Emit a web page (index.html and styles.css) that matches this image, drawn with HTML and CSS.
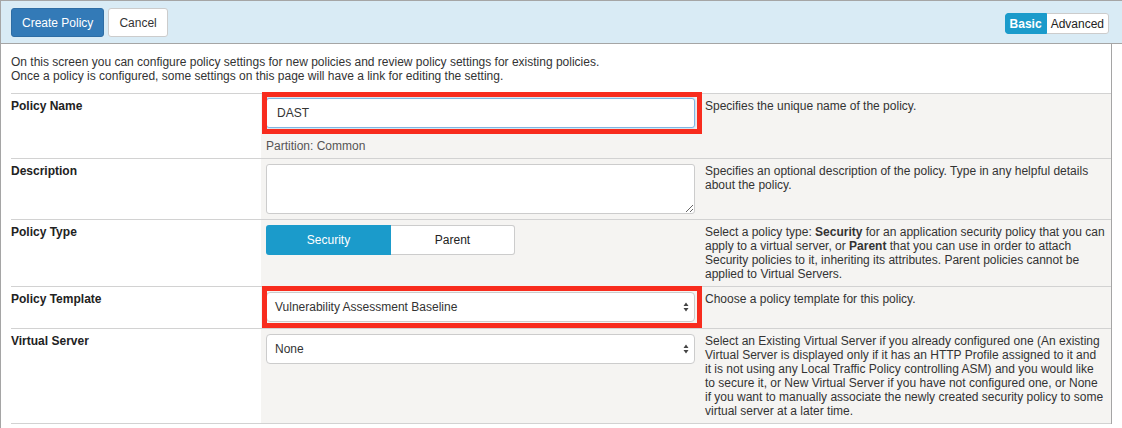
FILE: index.html
```html
<!DOCTYPE html>
<html>
<head>
<meta charset="utf-8">
<title>Create Policy</title>
<link rel="stylesheet" href="styles.css">
</head>
<body>
<div class="page">
  <div class="toolbar">
    <div class="actions">
      <button class="btn btn-primary">Create Policy</button>
      <button class="btn btn-default">Cancel</button>
    </div>
    <div class="mode">
      <span class="mode-item active">Basic</span><span class="mode-item">Advanced</span>
    </div>
  </div>
  <div class="content">
    <div class="intro">
      On this screen you can configure policy settings for new policies and review policy settings for existing policies.<br>
      Once a policy is configured, some settings on this page will have a link for editing the setting.
    </div>
    <div class="rows">
      <div class="row">
        <div class="label">Policy Name</div>
        <div class="field field-name">
          <div class="annot">
            <input class="input focused" type="text" value="DAST">
          </div>
          <div class="partition">Partition: Common</div>
        </div>
        <div class="desc">Specifies the unique name of the policy.</div>
      </div>
      <div class="row">
        <div class="label">Description</div>
        <div class="field">
          <textarea class="textarea"></textarea>
        </div>
        <div class="desc">Specifies an optional description of the policy. Type in any helpful details<br>about the policy.</div>
      </div>
      <div class="row">
        <div class="label">Policy Type</div>
        <div class="field">
          <div class="segmented">
            <span class="seg active">Security</span><span class="seg">Parent</span>
          </div>
        </div>
        <div class="desc">Select a policy type: <b>Security</b> for an application security policy that you can<br>apply to a virtual server, or <b>Parent</b> that you can use in order to attach<br>Security policies to it, inheriting its attributes. Parent policies cannot be<br>applied to Virtual Servers.</div>
      </div>
      <div class="row row-template">
        <div class="label">Policy Template</div>
        <div class="field">
          <div class="annot">
            <div class="select">
              <span class="select-text">Vulnerability Assessment Baseline</span>
              <svg class="arrows" width="6" height="10" viewBox="0 0 6 10"><path d="M3 0.5 L5.5 4 L0.5 4 Z M0.5 6 L5.5 6 L3 9.5 Z" fill="#444"/></svg>
            </div>
          </div>
        </div>
        <div class="desc">Choose a policy template for this policy.</div>
      </div>
      <div class="row">
        <div class="label">Virtual Server</div>
        <div class="field">
          <div class="select">
            <span class="select-text">None</span>
            <svg class="arrows" width="6" height="10" viewBox="0 0 6 10"><path d="M3 0.5 L5.5 4 L0.5 4 Z M0.5 6 L5.5 6 L3 9.5 Z" fill="#444"/></svg>
          </div>
        </div>
        <div class="desc">Select an Existing Virtual Server if you already configured one (An existing<br>Virtual Server is displayed only if it has an HTTP Profile assigned to it and<br>it is not using any Local Traffic Policy controlling ASM) and you would like<br>to secure it, or New Virtual Server if you have not configured one, or None<br>if you want to manually associate the newly created security policy to some<br>virtual server at a later time.</div>
      </div>
    </div>
  </div>
</div>
</body>
</html>
```

FILE: styles.css
```css
html, body {
  margin: 0;
  padding: 0;
  background: #fff;
  overflow: hidden;
}
body {
  font-family: "Liberation Sans", Arial, Helvetica, sans-serif;
  font-size: 12px;
  color: #333;
}
.page {
  border-left: 1px solid #a5a5a5;
  min-height: 428px;
}
.toolbar {
  display: flex;
  justify-content: space-between;
  align-items: flex-start;
  background: #d9ebf5;
  border-top: 1px solid #a5a5a5;
  border-bottom: 1px solid #a5a5a5;
  padding: 7px 12px 0 10px;
  box-sizing: border-box;
  height: 44px;
}
.actions {
  display: flex;
  gap: 4px;
}
.btn {
  font-family: inherit;
  font-size: 12px;
  height: 29px;
  border-radius: 3px;
  padding: 0 10px;
  cursor: pointer;
}
.btn-primary {
  background: #337ab7;
  border: 1px solid #2e6da4;
  color: #fff;
}
.btn-default {
  background: #fff;
  border: 1px solid #ccc;
  color: #333;
}
.mode {
  display: flex;
  margin-top: 5px;
  margin-right: 1px;
  border-radius: 3px;
  overflow: hidden;
}
.mode-item {
  display: inline-flex;
  align-items: center;
  height: 21px;
  padding: 0 4px;
  box-sizing: border-box;
  background: #fff;
  border: 1px solid #ccc;
  border-left: none;
  color: #222;
  border-radius: 0 3px 3px 0;
}
.mode-item.active {
  background: #1b9bcb;
  border: 1px solid #1b9bcb;
  color: #fff;
  font-weight: bold;
  border-radius: 3px 0 0 3px;
  width: 42px;
  justify-content: center;
}
.content {
  margin: 0 10px;
  border-right: 1px solid #a5a5a5;
}
.intro {
  line-height: 14px;
  padding: 11px 0 10px 0;
  color: #333;
}
.rows {
  border-bottom: 1px solid #d2d2d2;
}
.row {
  display: grid;
  grid-template-columns: 250px 439px 1fr;
  border-top: 1px solid #d2d2d2;
}
.label {
  background: #fff;
  font-weight: bold;
  color: #222;
  padding-top: 5px;
  line-height: 14px;
}
.field {
  background: #f5f4f2;
  padding: 5px;
}
.field-name {
  padding-top: 4px;
}
.row-template .field {
  padding-bottom: 6px;
}
.desc {
  background: #f5f4f2;
  padding: 5px;
  line-height: 14px;
  color: #333;
  white-space: nowrap;
}
.annot {
  position: relative;
  width: 429px;
}
.annot::after {
  content: "";
  position: absolute;
  top: -6px;
  right: -7px;
  bottom: -6px;
  left: -4px;
  border: 5px solid #f82c1e;
  pointer-events: none;
}
.input {
  display: block;
  box-sizing: border-box;
  width: 429px;
  height: 30px;
  border: 1px solid #ccc;
  border-radius: 3px;
  padding: 0 10px;
  font-family: inherit;
  font-size: 12px;
  color: #333;
  background: #fff;
  margin: 0;
}
.input.focused {
  border-color: #7fb6e4;
  box-shadow: 0 0 3px rgba(102, 175, 233, 0.6);
  outline: none;
}
.partition {
  margin-top: 11px;
  line-height: 14px;
  color: #555;
}
.textarea {
  display: block;
  box-sizing: border-box;
  width: 429px;
  height: 50px;
  border: 1px solid #ccc;
  border-radius: 3px;
  background: #fff;
  font-family: inherit;
  font-size: 12px;
  margin: 0;
}
.segmented {
  display: flex;
  width: 249px;
  height: 30px;
}
.seg {
  flex: 0 0 auto;
  display: flex;
  align-items: center;
  justify-content: center;
  box-sizing: border-box;
  height: 30px;
  font-size: 12px;
}
.seg.active {
  width: 125px;
  background: #1b9bcb;
  color: #fff;
  border-radius: 3px 0 0 3px;
}
.seg:not(.active) {
  width: 124px;
  background: #fff;
  color: #222;
  border: 1px solid #ccc;
  border-left: none;
  border-radius: 0 3px 3px 0;
}
.select {
  position: relative;
  display: flex;
  align-items: center;
  box-sizing: border-box;
  width: 429px;
  height: 30px;
  border: 1px solid #ccc;
  border-radius: 4px;
  background: #fff;
  padding: 0 8px;
  color: #333;
}
.arrows {
  position: absolute;
  right: 5px;
  top: 9px;
}
```
